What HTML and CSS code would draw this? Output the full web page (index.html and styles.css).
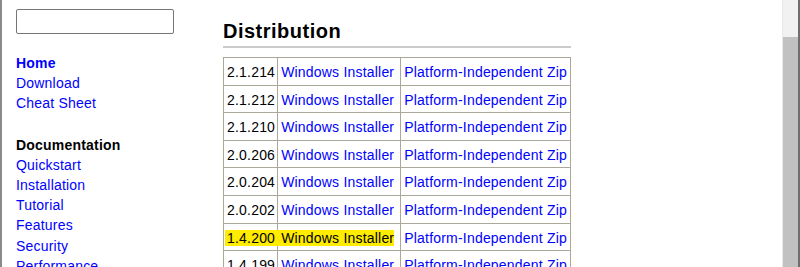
FILE: index.html
```html
<!DOCTYPE html>
<html lang="en">
<head>
<meta charset="utf-8">
<title>Distribution</title>
<link rel="stylesheet" href="styles.css">
</head>
<body>
<div class="frame">
  <div class="page">
    <aside class="sidebar">
      <input class="search" type="text" aria-label="Search">
      <ul class="nav">
        <li><a class="current" href="#">Home</a></li>
        <li><a href="#">Download</a></li>
        <li><a href="#">Cheat Sheet</a></li>
      </ul>
      <ul class="nav section">
        <li class="nav-title">Documentation</li>
        <li><a href="#">Quickstart</a></li>
        <li><a href="#">Installation</a></li>
        <li><a href="#">Tutorial</a></li>
        <li><a href="#">Features</a></li>
        <li><a href="#">Security</a></li>
        <li><a href="#">Performance</a></li>
        <li><a href="#">Advanced</a></li>
      </ul>
    </aside>
    <main class="main">
      <div class="dist">
        <h2 class="title">Distribution</h2>
        <table class="versions">
          <tr><td>2.1.214</td><td><a href="#">Windows Installer</a></td><td><a href="#">Platform-Independent Zip</a></td></tr>
          <tr><td>2.1.212</td><td><a href="#">Windows Installer</a></td><td><a href="#">Platform-Independent Zip</a></td></tr>
          <tr><td>2.1.210</td><td><a href="#">Windows Installer</a></td><td><a href="#">Platform-Independent Zip</a></td></tr>
          <tr><td>2.0.206</td><td><a href="#">Windows Installer</a></td><td><a href="#">Platform-Independent Zip</a></td></tr>
          <tr><td>2.0.204</td><td><a href="#">Windows Installer</a></td><td><a href="#">Platform-Independent Zip</a></td></tr>
          <tr><td>2.0.202</td><td><a href="#">Windows Installer</a></td><td><a href="#">Platform-Independent Zip</a></td></tr>
          <tr><td><span class="hl hl-start">1.4.200</span></td><td><span class="hl hl-end">Windows Installer</span></td><td><a href="#">Platform-Independent Zip</a></td></tr>
          <tr><td>1.4.199</td><td><a href="#">Windows Installer</a></td><td><a href="#">Platform-Independent Zip</a></td></tr>
          <tr><td>1.4.198</td><td><a href="#">Windows Installer</a></td><td><a href="#">Platform-Independent Zip</a></td></tr>
        </table>
      </div>
    </main>
  </div>
  <div class="scrollbar"><div class="thumb"></div></div>
</div>
</body>
</html>
```

FILE: styles.css
```css
html, body {
  margin: 0;
  padding: 0;
  background: #ffffff;
}

body {
  font-family: "Liberation Sans", Arial, sans-serif;
  font-size: 14px;
  letter-spacing: 0.2px;
  color: #000000;
}

a {
  color: #0000ff;
  text-decoration: none;
}

.frame {
  display: flex;
  height: 267px;
  overflow: hidden;
  border-left: 2px solid #8a8a8a;
  border-right: 2px solid #6e6e6e;
}

.page {
  flex: 1;
  display: flex;
  min-width: 0;
}

.sidebar {
  box-sizing: border-box;
  width: 221px;
  flex: none;
  padding: 9px 0 0 14px;
}

.search {
  box-sizing: border-box;
  display: block;
  width: 158px;
  height: 25px;
  margin: 0;
  padding: 1px 3px;
  border: 1px solid #767676;
  border-radius: 2px;
  background: #ffffff;
  font: inherit;
}

.nav {
  list-style: none;
  margin: 19px 0 0 0;
  padding: 0;
  line-height: 20.2px;
}

.nav.section {
  margin-top: 21px;
}

.nav .current {
  font-weight: bold;
}

.nav-title {
  font-weight: bold;
  color: #000000;
}

.main {
  flex: 1;
  padding-top: 20px;
}

.dist {
  width: max-content;
}

.title {
  margin: 0 0 9px 0;
  padding: 0 0 3px 0;
  font-size: 20px;
  line-height: 23px;
  letter-spacing: 0.5px;
  font-weight: bold;
  border-bottom: 2px solid #cccccc;
}

.versions {
  border-collapse: collapse;
  border: 1px solid #aca899;
}

.versions td {
  border: 1px solid #aca899;
  padding: 6px 3px 4px 3px;
  line-height: 16.6px;
  text-align: left;
  vertical-align: top;
  white-space: nowrap;
}

.versions td:first-child {
  padding-left: 3px;
  padding-right: 2px;
}

.versions td:nth-child(2) {
  padding-right: 6px;
}

.hl {
  background: #ffec00;
  color: #000000;
}

.hl-start {
  margin-left: -2px;
  padding-left: 2px;
  margin-right: -3px;
  padding-right: 3px;
}

.hl-end {
  margin-left: -3px;
  padding-left: 3px;
}

.scrollbar {
  box-sizing: border-box;
  width: 16px;
  flex: none;
  background: #f1f1f1;
  border-left: 1px solid #e8e8e8;
}

.thumb {
  margin-top: 37px;
  height: 400px;
  background: #c1c1c1;
}
```
